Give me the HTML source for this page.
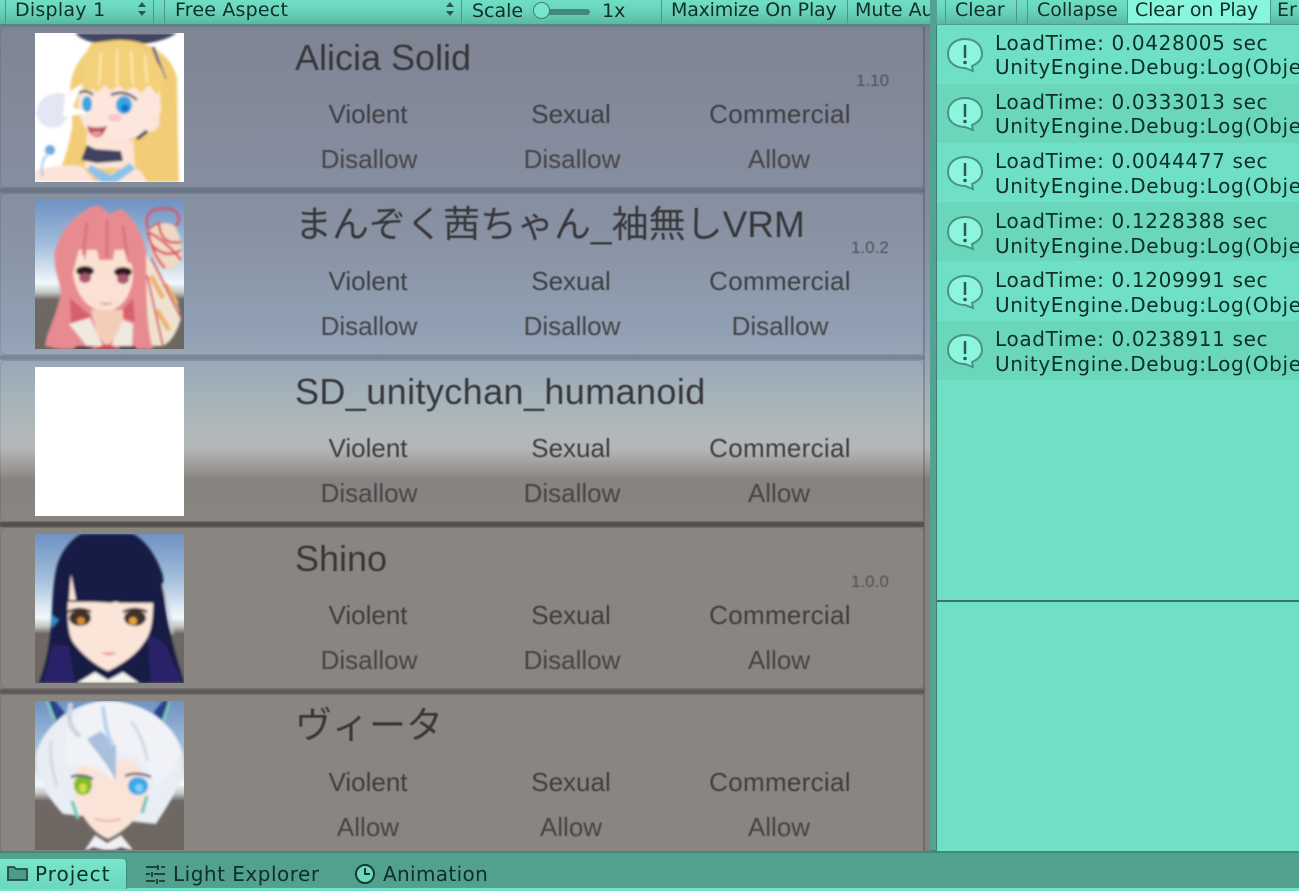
<!DOCTYPE html>
<html><head><meta charset="utf-8">
<style>
html,body{margin:0;padding:0;width:1299px;height:891px;overflow:hidden;background:#6fdfc5}
.a{position:absolute;white-space:nowrap}
#stage{position:absolute;left:0;top:0;width:1299px;height:891px;overflow:hidden}
#game{position:absolute;left:0;top:24px;width:930px;height:827px;background:linear-gradient(180deg,#7a808f 0,#838d9f 200px,#8d9db1 310px,#a3b0b9 375px,#aeb6b7 410px,#b0b4b3 425px,#97938f 445px,#827e7b 456px,#85807c 500px,#85807c 827px)}
.card{position:absolute;left:1px;width:922px;height:160px;background:rgba(255,255,255,.04);border-radius:5px;box-shadow:0 0 0 1px rgba(60,70,90,.12)}
.sep{position:absolute;left:0;width:924px;height:5px;background:rgba(40,50,70,.26);filter:blur(.6px)}
.t{font-family:"Liberation Sans","Noto Sans CJK JP",sans-serif;color:#38383b;filter:blur(.45px);position:absolute;white-space:nowrap}
.title{font-size:36px;line-height:40px;left:295px}
.cjk{font-size:37px;left:295px}
.l{font-size:26px;line-height:30px;text-align:center;width:200px;color:#3e3e41}
.c{letter-spacing:.3px}
.d{color:#454548}
.v{font-size:17px;line-height:18px;color:#515257}
.u{font-family:"DejaVu Sans",sans-serif;color:#0e2f2a;position:absolute;white-space:nowrap;filter:blur(.3px)}
.tb{font-size:19px;line-height:22px;top:-1px}
.log{font-size:20px;letter-spacing:.65px;line-height:24px;left:995px}
.vs{position:absolute;top:0;width:1px;height:23px;background:#4a9787}
.row{position:absolute;left:937px;width:362px;height:59px}
.pic{position:absolute;left:35px;width:149px;height:149px;overflow:hidden}
.pic svg{display:block}
.ic{position:absolute;left:946px}
</style></head><body>
<div id="stage">
<svg width="0" height="0" style="position:absolute"><defs>
<filter id="b" x="-10%" y="-10%" width="120%" height="120%"><feGaussianBlur stdDeviation="1.25"/></filter>
<linearGradient id="sky" x1="0" y1="0" x2="0" y2="1"><stop offset="0" stop-color="#6f92c4"/><stop offset=".3" stop-color="#a3bedb"/><stop offset=".56" stop-color="#f2f8fb"/><stop offset=".62" stop-color="#c3c6c0"/><stop offset=".67" stop-color="#6f6864"/><stop offset="1" stop-color="#6c6560"/></linearGradient>
</defs></svg>

<div id="game">
<div class="card" style="top:3px"></div>
<div class="card" style="top:170px"></div>
<div class="card" style="top:337px"></div>
<div class="card" style="top:504px"></div>
<div class="card" style="top:671px"></div>
<div class="sep" style="top:164px"></div>
<div class="sep" style="top:331px"></div>
<div class="sep" style="top:498px;background:rgba(40,36,34,.55)"></div>
<div class="sep" style="top:665px;background:rgba(40,36,34,.42)"></div>
<div style="position:absolute;left:923px;top:0;width:2px;height:827px;background:rgba(50,50,60,.22)"></div>
</div>

<!-- Avatars -->
<div class="pic" style="top:33px"><svg width="149" height="149" viewBox="0 0 149 149"><rect width="149" height="149" fill="#fff"/><g filter="url(#b)">
<path d="M40 0Q50 12 85 12Q125 12 142 0Z" fill="#43455f"/>
<path d="M85 7C60 7 42 22 36 48C33 75 40 85 36 100C32 120 28 132 22 142L40 149H144L143 110L142 45C136 20 112 7 85 7Z" fill="#f2cd77"/>
<path d="M118 14L130 46" stroke="#5b5d85" stroke-width="3" fill="none"/>
<path d="M48 48L124 50L126 78C120 94 102 110 70 110C54 106 44 90 43 70Z" fill="#fde7dc"/>
<path d="M52 100L98 108L100 135L50 135Z" fill="#fde4d8"/>
<path d="M57 10C46 24 44 42 49 58L58 56L62 60L70 52L76 58L84 52L90 58L100 54L106 60L114 52L122 62L130 45C122 20 100 7 80 7Z" fill="#f3d07a"/>
<path d="M66 20L64 52M82 16L82 52M96 18L98 52M110 22L112 50" stroke="#fbe7a9" stroke-width="2.500" fill="none"/>
<ellipse cx="52" cy="71" rx="5" ry="8" fill="#3aa7e2"/>
<path d="M44 60Q52 56 58 62" stroke="#54506a" stroke-width="2.500" fill="none"/>
<ellipse cx="89" cy="72" rx="8" ry="9" fill="#38a6e2"/><ellipse cx="90" cy="75" rx="4" ry="4" fill="#1676c2"/>
<path d="M76 62Q90 56 102 67" stroke="#4a4460" stroke-width="2.500" fill="none"/>
<ellipse cx="80" cy="85" rx="7" ry="4" fill="#f9c8d4"/>
<path d="M52 93Q62 96 72 93Q68 106 60 104Q54 102 52 93Z" fill="#bd5560"/><path d="M56 100Q62 97 67 100Q64 104 59 103Z" fill="#f29a9a"/>
<path d="M118 78Q126 78 124 92Q118 102 112 98Z" fill="#fde4d8"/>
<path d="M102 106L112 98" stroke="#45465f" stroke-width="3.500"/>
<path d="M52 112L60 116L86 118L88 128L62 130L46 127Z" fill="#41435f"/>
<path d="M0 137Q30 130 48 134L60 149H0ZM90 134Q105 132 112 149H60Z" fill="#fde4da"/>
<path d="M56 132L76 142L95 130L100 136L82 149H66L52 137Z" fill="#8cc3e8"/>
<path d="M1 80Q4 62 22 60Q36 60 38 70Q36 84 24 94Q6 98 1 80Z" fill="#e3e6f3"/>
<path d="M30 62L48 50L38 74L54 80L28 84Z" fill="#fff"/>
<ellipse cx="15" cy="117" rx="5" ry="5" fill="#6fa9dd"/>
<path d="M14 120Q4 128 8 144" stroke="#a9c8e8" stroke-width="2" fill="none"/>
</g></svg></div>

<div class="pic" style="top:200px"><svg width="149" height="149" viewBox="0 0 149 149"><rect width="149" height="149" fill="url(#sky)"/><g filter="url(#b)">
<path d="M115 60C128 85 142 95 146 118Q140 140 128 146H112C104 110 106 70 108 52Z" fill="#efe3cf"/>
<path d="M116 76L128 98M122 110L134 130M130 84L142 104" stroke="#eeb272" stroke-width="5"/>
<path d="M116 58L146 118M112 75L128 146" stroke="#d94f60" stroke-width="2" fill="none"/>
<path d="M113 30Q108 12 122 9Q142 6 144 18Q144 28 132 26Q122 20 115 30" stroke="#d65666" stroke-width="2.500" fill="none"/>
<path d="M113 32Q126 18 140 26Q150 45 146 60Q136 74 126 68Q112 50 113 32Z" fill="#efd9c3"/>
<path d="M113 32Q130 40 146 60M113 32Q118 56 130 68M124 24Q126 46 146 42M116 44Q130 60 146 50" stroke="#d94f60" stroke-width="2.500" fill="none"/>
<path d="M63 5C50 8 26 24 20 52C18 68 24 78 26 92C22 115 12 130 10 146L24 149H118C110 120 112 85 111 50C104 24 92 12 86 9L75 14Z" fill="#e88b90"/>
<path d="M35 98L36 124L56 116ZM98 98L100 122L82 116Z" fill="#d85f6c"/>
<path d="M38 72C40 98 58 112 70 112C86 110 98 95 98 72L94 50H44Z" fill="#fbe1d3"/>
<path d="M38 68L44 30L50 62L56 24L64 60L78 60L84 26L92 62L98 64L102 38L84 14H52Z" fill="#e88b90"/>
<path d="M52 22L48 55M72 20L72 58M88 26L92 55" stroke="#c96a74" stroke-width="2" fill="none"/>
<ellipse cx="50" cy="71" rx="9" ry="5" fill="#2d1820"/><ellipse cx="88" cy="72" rx="9" ry="5" fill="#2d1820"/>
<ellipse cx="50" cy="78" rx="6" ry="5" fill="#a8566c"/><ellipse cx="88" cy="79" rx="6" ry="5" fill="#a8566c"/>
<path d="M65 103Q71 105 77 103" stroke="#d49a8c" stroke-width="1.500"/>
<path d="M56 110H88V130L72 146L62 135Z" fill="#f4cdb8"/>
<path d="M34 124L55 118L68 146H52Z" fill="#efe9e0"/><path d="M76 146L88 120L98 124L97 146Z" fill="#efe9e0"/>
<path d="M60 149Q72 140 84 149Z" fill="#d6485e"/><path d="M42 146H60L55 149H38ZM84 146H100L102 149H84Z" fill="#4f2c3a"/>
</g></svg></div>

<div class="pic" style="top:367px;background:#fff"></div>

<div class="pic" style="top:534px"><svg width="149" height="149" viewBox="0 0 149 149"><rect width="149" height="149" fill="url(#sky)"/><g filter="url(#b)">
<path d="M46 0C32 8 24 22 21 36C16 60 18 85 14 110C12 125 8 138 4 149H149C144 130 130 95 128 42C122 22 110 6 98 0Z" fill="#171d44"/>
<path d="M8 149L18 110L34 112L40 149ZM112 100L130 110L148 149H116Z" fill="#2c2068"/>
<path d="M128 50L138 100" stroke="#c6ccda" stroke-width="2"/>
<path d="M33 68C32 88 34 102 38 108C48 122 62 132 73 137C84 132 100 122 108 110C116 100 118 88 118 68Z" fill="#fbe5d9"/>
<path d="M60 138L73 146L88 138L104 149H42Z" fill="#f7f4f2"/>
<path d="M36 40L34 66L41 66Z" fill="#fbe5d9"/>
<path d="M41 62L50 68L54 50L60 68L78 69L78 56L84 69L118 69L120 40L100 20H50Z" fill="#171d44"/>
<ellipse cx="45" cy="84" rx="11" ry="8" fill="#403029"/><ellipse cx="100" cy="84" rx="11" ry="8" fill="#403029"/>
<circle cx="46" cy="87" r="4" fill="#d98a32"/><circle cx="98" cy="87" r="4" fill="#e8a33a"/>
<path d="M33 78Q45 72 56 78M88 78Q100 72 112 78" stroke="#2e2422" stroke-width="2.500" fill="none"/>
<path d="M66 119Q74 117 82 119Q74 124 66 119Z" fill="#eda99a"/>
<path d="M16 80L24 86L17 94Z" fill="#2f86c6"/>
</g></svg></div>

<div class="pic" style="top:701px"><svg width="149" height="149" viewBox="0 0 149 149"><rect width="149" height="149" fill="url(#sky)"/><g filter="url(#b)">
<path d="M12 0L20 22L30 12L20 0ZM137 0L128 22L118 12L128 0Z" fill="#2c3f8c"/><path d="M12 0L20 20M135 0L128 20" stroke="#7fd8b8" stroke-width="2.500"/>
<path d="M72 0C35 0 5 30 1 55C3 85 18 102 28 113L121 123C132 105 148 85 148 55C145 30 115 0 72 0Z" fill="#e9edf4"/>
<path d="M38 76C36 100 52 130 73 138C92 130 114 108 114 85L100 60H50Z" fill="#fbe3d7"/>
<path d="M72 0C44 0 26 24 30 62C38 72 44 62 50 64C60 68 70 72 80 80L80 50L104 58C110 70 116 78 122 84C135 72 144 60 146 50C138 20 105 0 72 0Z" fill="#f0f2f7"/>
<path d="M52 38C62 52 72 62 81 80L81 45L66 30Z" fill="#a9bfdd"/>
<path d="M68 5Q70 30 78 45" stroke="#b8d2ea" stroke-width="4" fill="none"/>
<path d="M36 2Q30 25 45 35" stroke="#cfd5de" stroke-width="5" fill="none"/>
<path d="M96 20Q110 40 112 60M16 40Q14 60 22 85" stroke="#d2d8e2" stroke-width="3" fill="none"/>
<ellipse cx="48" cy="84" rx="9" ry="10" fill="#7fbb25"/><ellipse cx="48" cy="87" rx="4" ry="5" fill="#cfe04a"/>
<ellipse cx="103" cy="85" rx="10" ry="9" fill="#3ea7e8"/><ellipse cx="104" cy="87" rx="4" ry="4" fill="#7ed0f4"/>
<path d="M36 76Q46 72 58 78M90 75Q102 70 116 76" stroke="#516075" stroke-width="2.500" fill="none"/>
<path d="M37 100L43 118M112 95L107 112" stroke="#6cc6b4" stroke-width="3.500"/>
<path d="M60 118Q73 122 86 118" stroke="#e0a999" stroke-width="1.500" fill="none"/>
<path d="M50 149L60 134L72 142L86 134L98 149Z" fill="#f0eff2"/>
<path d="M58 146L70 149H52ZM86 146L96 149H78Z" fill="#28357f"/>
</g></svg></div>

<!-- Titles & labels -->
<div class="t title" style="top:38px">Alicia Solid</div>
<div class="t title cjk" style="top:205px">まんぞく茜ちゃん_袖無しVRM</div>
<div class="t title" style="top:372px;letter-spacing:.4px">SD_unitychan_humanoid</div>
<div class="t title" style="top:539px">Shino</div>
<div class="t title cjk" style="top:706px">ヴィータ</div>

<div class="t v" style="left:856px;top:72px">1.10</div>
<div class="t v" style="left:851px;top:239px">1.0.2</div>
<div class="t v" style="left:851px;top:573px">1.0.0</div>

<div class="t l" style="left:268px;top:99px">Violent</div><div class="t l" style="left:471px;top:99px">Sexual</div><div class="t l c" style="left:680px;top:99px">Commercial</div>
<div class="t l d" style="left:269px;top:144px">Disallow</div><div class="t l d" style="left:472px;top:144px">Disallow</div><div class="t l d" style="left:679px;top:144px">Allow</div>

<div class="t l" style="left:268px;top:266px">Violent</div><div class="t l" style="left:471px;top:266px">Sexual</div><div class="t l c" style="left:680px;top:266px">Commercial</div>
<div class="t l d" style="left:269px;top:311px">Disallow</div><div class="t l d" style="left:472px;top:311px">Disallow</div><div class="t l d" style="left:680px;top:311px">Disallow</div>

<div class="t l" style="left:268px;top:433px">Violent</div><div class="t l" style="left:471px;top:433px">Sexual</div><div class="t l c" style="left:680px;top:433px">Commercial</div>
<div class="t l d" style="left:269px;top:478px">Disallow</div><div class="t l d" style="left:472px;top:478px">Disallow</div><div class="t l d" style="left:679px;top:478px">Allow</div>

<div class="t l" style="left:268px;top:600px">Violent</div><div class="t l" style="left:471px;top:600px">Sexual</div><div class="t l c" style="left:680px;top:600px">Commercial</div>
<div class="t l d" style="left:269px;top:645px">Disallow</div><div class="t l d" style="left:472px;top:645px">Disallow</div><div class="t l d" style="left:679px;top:645px">Allow</div>

<div class="t l" style="left:268px;top:767px">Violent</div><div class="t l" style="left:471px;top:767px">Sexual</div><div class="t l c" style="left:680px;top:767px">Commercial</div>
<div class="t l d" style="left:268px;top:812px">Allow</div><div class="t l d" style="left:471px;top:812px">Allow</div><div class="t l d" style="left:679px;top:812px">Allow</div>

<!-- Splitter + console -->
<div class="a" style="left:930px;top:24px;width:7px;height:827px;background:#52a391;border-right:1px solid #3f7f72;box-sizing:border-box"></div>
<div class="a" style="left:937px;top:24px;width:362px;height:827px;background:#6fdfc5"></div>
<div class="row" style="top:84px;background:#6ad7bd"></div>
<div class="row" style="top:202px;background:#6ad7bd"></div>
<div class="row" style="top:321px;background:#6ad7bd"></div>
<div class="a" style="left:937px;top:600px;width:362px;height:2px;background:#3d7268"></div>

<svg class="ic" style="top:37px" width="38" height="36" viewBox="0 0 38 36"><path d="M19 2C9 2 2 8 2 17C2 26 10 31 19 31L27 34L26 29C33 26 36 22 36 17C36 8 29 2 19 2Z" fill="#8bf5dd" stroke="#4a9383" stroke-width="2"/><path d="M19 8V21" stroke="#2a5b52" stroke-width="2.500"/><circle cx="19" cy="25.500" r="1.800" fill="#2a5b52"/></svg>
<svg class="ic" style="top:96px" width="38" height="36" viewBox="0 0 38 36"><path d="M19 2C9 2 2 8 2 17C2 26 10 31 19 31L27 34L26 29C33 26 36 22 36 17C36 8 29 2 19 2Z" fill="#8bf5dd" stroke="#4a9383" stroke-width="2"/><path d="M19 8V21" stroke="#2a5b52" stroke-width="2.500"/><circle cx="19" cy="25.500" r="1.800" fill="#2a5b52"/></svg>
<svg class="ic" style="top:155px" width="38" height="36" viewBox="0 0 38 36"><path d="M19 2C9 2 2 8 2 17C2 26 10 31 19 31L27 34L26 29C33 26 36 22 36 17C36 8 29 2 19 2Z" fill="#8bf5dd" stroke="#4a9383" stroke-width="2"/><path d="M19 8V21" stroke="#2a5b52" stroke-width="2.500"/><circle cx="19" cy="25.500" r="1.800" fill="#2a5b52"/></svg>
<svg class="ic" style="top:215px" width="38" height="36" viewBox="0 0 38 36"><path d="M19 2C9 2 2 8 2 17C2 26 10 31 19 31L27 34L26 29C33 26 36 22 36 17C36 8 29 2 19 2Z" fill="#8bf5dd" stroke="#4a9383" stroke-width="2"/><path d="M19 8V21" stroke="#2a5b52" stroke-width="2.500"/><circle cx="19" cy="25.500" r="1.800" fill="#2a5b52"/></svg>
<svg class="ic" style="top:274px" width="38" height="36" viewBox="0 0 38 36"><path d="M19 2C9 2 2 8 2 17C2 26 10 31 19 31L27 34L26 29C33 26 36 22 36 17C36 8 29 2 19 2Z" fill="#8bf5dd" stroke="#4a9383" stroke-width="2"/><path d="M19 8V21" stroke="#2a5b52" stroke-width="2.500"/><circle cx="19" cy="25.500" r="1.800" fill="#2a5b52"/></svg>
<svg class="ic" style="top:333px" width="38" height="36" viewBox="0 0 38 36"><path d="M19 2C9 2 2 8 2 17C2 26 10 31 19 31L27 34L26 29C33 26 36 22 36 17C36 8 29 2 19 2Z" fill="#8bf5dd" stroke="#4a9383" stroke-width="2"/><path d="M19 8V21" stroke="#2a5b52" stroke-width="2.500"/><circle cx="19" cy="25.500" r="1.800" fill="#2a5b52"/></svg>

<div class="u log" style="top:31px">LoadTime: 0.0428005 sec</div><div class="u log" style="top:55px">UnityEngine.Debug:Log(Object)</div>
<div class="u log" style="top:90px">LoadTime: 0.0333013 sec</div><div class="u log" style="top:114px">UnityEngine.Debug:Log(Object)</div>
<div class="u log" style="top:149px">LoadTime: 0.0044477 sec</div><div class="u log" style="top:174px">UnityEngine.Debug:Log(Object)</div>
<div class="u log" style="top:209px">LoadTime: 0.1228388 sec</div><div class="u log" style="top:234px">UnityEngine.Debug:Log(Object)</div>
<div class="u log" style="top:268px">LoadTime: 0.1209991 sec</div><div class="u log" style="top:293px">UnityEngine.Debug:Log(Object)</div>
<div class="u log" style="top:327px">LoadTime: 0.0238911 sec</div><div class="u log" style="top:352px">UnityEngine.Debug:Log(Object)</div>

<!-- Top toolbar -->
<div class="a" style="left:0;top:0;width:1299px;height:24px;background:linear-gradient(180deg,#70dfc5 0,#68d3ba 50%,#5ab8a2 100%)"></div>
<div class="a" style="left:0;top:24px;width:930px;height:2px;background:#4c8a86"></div>
<div class="a" style="left:930px;top:24px;width:369px;height:1px;background:#4f9f8e"></div>
<div class="a" style="left:930px;top:0;width:7px;height:25px;background:#52a391"></div>
<div class="a" style="left:1128px;top:0;width:142px;height:23px;background:#88f6dc"></div>
<div class="vs" style="left:5px"></div><div class="vs" style="left:153px"></div><div class="vs" style="left:164px"></div><div class="vs" style="left:461px"></div><div class="vs" style="left:661px"></div><div class="vs" style="left:847px"></div><div class="vs" style="left:945px"></div><div class="vs" style="left:1016px"></div><div class="vs" style="left:1027px"></div><div class="vs" style="left:1127px"></div><div class="vs" style="left:1270px"></div>

<div class="u tb" style="left:15px;letter-spacing:.25px">Display 1</div>
<svg class="a" style="left:137px;top:1px" width="10" height="16" viewBox="0 0 10 16"><path d="M5 1L9 6H1ZM5 15L1 10H9Z" fill="#2c5a52"/></svg>
<div class="u tb" style="left:175px;letter-spacing:.2px">Free Aspect</div>
<svg class="a" style="left:445px;top:1px" width="10" height="16" viewBox="0 0 10 16"><path d="M5 1L9 6H1ZM5 15L1 10H9Z" fill="#2c5a52"/></svg>
<div class="u tb" style="left:472px;top:0">Scale</div>
<div class="a" style="left:542px;top:9px;width:48px;height:6px;border-radius:3px;background:#3f8a7c"></div>
<div class="a" style="left:533px;top:2px;width:17px;height:17px;border-radius:50%;background:#78e6cc;border:1.500px solid #3f7f72;box-sizing:border-box"></div>
<div class="u tb" style="left:602px;top:0">1x</div>
<div class="u tb" style="left:671px;letter-spacing:-.2px">Maximize On Play</div>
<div class="a" style="left:855px;top:0;width:75px;height:24px;overflow:hidden"><div class="u tb" style="left:0">Mute Audio</div></div>
<div class="u tb" style="left:955px">Clear</div>
<div class="u tb" style="left:1037px">Collapse</div>
<div class="u tb" style="left:1135px;letter-spacing:-.15px">Clear on Play</div>
<div class="u tb" style="left:1277px">Er</div>

<!-- Bottom tab bar -->
<div class="a" style="left:0;top:851px;width:1299px;height:37px;background:#52a18f;border-top:2px solid #3e8a78;box-sizing:border-box"></div>
<div class="a" style="left:0;top:888px;width:1299px;height:3px;background:#72e3c9"></div>
<div class="a" style="left:930px;top:850px;width:7px;height:2px;background:#3e8a78"></div>
<div class="a" style="left:0;top:859px;width:127px;height:30px;background:linear-gradient(180deg,#78e6cc,#6bd8be);border-radius:0 4px 0 0;border-right:1px solid #3f8a7a;box-sizing:border-box"></div>
<svg class="a" style="left:6px;top:864px" width="23" height="18" viewBox="0 0 23 18"><path d="M2 16V3H8L10 5H21V16Z" fill="#4f9b8a" stroke="#234c45" stroke-width="1.800"/></svg>
<div class="u" style="left:35px;top:862px;font-size:20px;line-height:24px;letter-spacing:1px">Project</div>
<svg class="a" style="left:145px;top:864px" width="21" height="20" viewBox="0 0 21 20"><path d="M1 3H12M16 3H20M1 10H5M9 10H20M1 17H10M14 17H20M13 1V6M7 8V13M12 15V20" stroke="#17392f" stroke-width="1.800" fill="none"/></svg>
<div class="u" style="left:173px;top:862px;font-size:20px;line-height:24px;letter-spacing:.5px">Light Explorer</div>
<svg class="a" style="left:354px;top:863px" width="22" height="22" viewBox="0 0 22 22"><circle cx="11" cy="11" r="9" fill="#6dd9bf" stroke="#17392f" stroke-width="2"/><path d="M11 5V11H16" stroke="#17392f" stroke-width="2" fill="none"/></svg>
<div class="u" style="left:383px;top:862px;font-size:20px;line-height:24px;letter-spacing:.35px">Animation</div>
</div>
</body></html>
